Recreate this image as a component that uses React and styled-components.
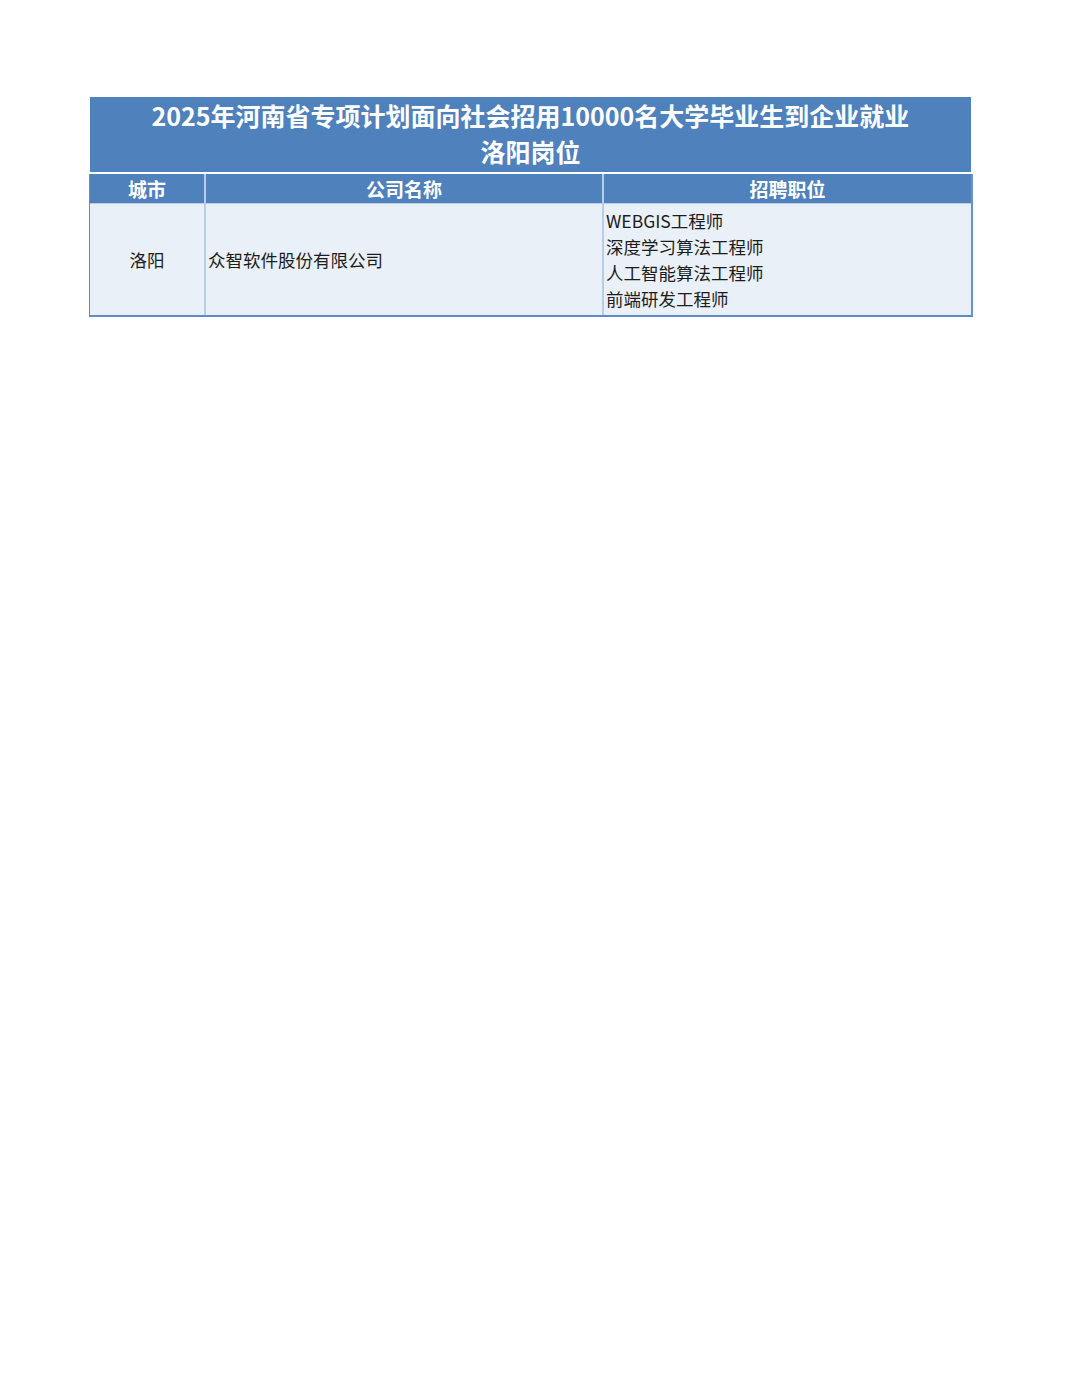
import React from 'react';
import styled, { createGlobalStyle } from 'styled-components';

const GlobalStyle = createGlobalStyle`
  html, body {
    margin: 0;
    padding: 0;
    background: #ffffff;
  }
  body {
    font-family: "Noto Sans CJK SC", "Noto Sans", sans-serif;
  }
`;

const Sheet = styled.div`
  width: 1080px;
  min-height: 1398px;
  padding: 97px 0 0 89px;
  box-sizing: border-box;
`;

const Title = styled.div`
  width: 881px;
  margin-left: 1px;
  padding: 0 0 3px;
  background: #4f81bd;
  color: #ffffff;
  font-size: 25px;
  font-weight: 700;
  line-height: 36px;
  text-align: center;
`;

const Table = styled.div`
  display: grid;
  grid-template-columns: 114px 396px 367px;
  grid-template-rows: 29px 111px;
  column-gap: 2px;
  row-gap: 1px;
  width: max-content;
  margin-top: 2px;
  background: #b9cde6;
  border-left: 1px solid #5f8ac6;
  border-right: 2px solid #6a92c9;
  border-bottom: 2px solid #5f8ac6;
`;

const HeadCell = styled.div`
  display: flex;
  align-items: center;
  justify-content: center;
  background: #4f81bd;
  color: #ffffff;
  font-size: 19px;
  font-weight: 700;
  line-height: 1;
`;

const Cell = styled.div`
  display: flex;
  flex-direction: column;
  justify-content: center;
  align-items: ${(p) => (p.$center ? 'center' : 'flex-start')};
  padding: 0 2px;
  background: #eaf0f8;
  color: #1c1c1c;
  font-size: 17.5px;
  line-height: 26px;
`;

const Line = styled.span`
  display: block;
  white-space: nowrap;
`;

const jobs = ['WEBGIS工程师', '深度学习算法工程师', '人工智能算法工程师', '前端研发工程师'];

export default function App() {
  return (
    <>
      <GlobalStyle />
      <Sheet>
        <Title>
          2025年河南省专项计划面向社会招用10000名大学毕业生到企业就业
          <br />
          洛阳岗位
        </Title>
        <Table>
          <HeadCell>城市</HeadCell>
          <HeadCell>公司名称</HeadCell>
          <HeadCell>招聘职位</HeadCell>
          <Cell $center>洛阳</Cell>
          <Cell>众智软件股份有限公司</Cell>
          <Cell>
            {jobs.map((j) => (
              <Line key={j}>{j}</Line>
            ))}
          </Cell>
        </Table>
      </Sheet>
    </>
  );
}
